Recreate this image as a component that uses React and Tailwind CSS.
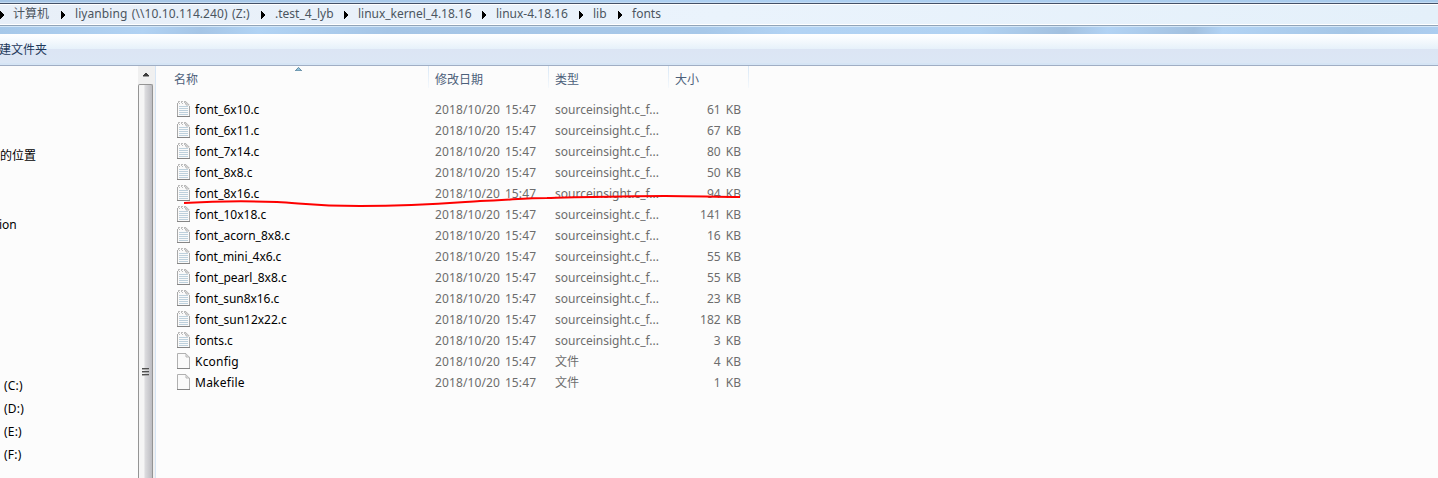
import React from "react";

const crumbs = [
  ["计算机", "w-[50px]", "pl-[8px]"],
  ["liyanbing (\\\\10.10.114.240) (Z:)", "w-[189px]", "pl-[9px] [word-spacing:1.2px] tracking-[0.08px]"],
  [".test_4_lyb", "w-[72px]", "pl-[9px]"],
  ["linux_kernel_4.18.16", "w-[127px]", "pl-[9px] tracking-[-0.03px]"],
  ["linux-4.18.16", "w-[86px]", "pl-[9px]"],
  ["lib", "w-[28px]", "pl-[9px]"],
  ["fonts", "w-[40px]", "pl-[9px]"],
];

const files = [
  ["font_6x10.c", "61 KB"],
  ["font_6x11.c", "67 KB"],
  ["font_7x14.c", "80 KB"],
  ["font_8x8.c", "50 KB"],
  ["font_8x16.c", "94 KB"],
  ["font_10x18.c", "141 KB"],
  ["font_acorn_8x8.c", "16 KB"],
  ["font_mini_4x6.c", "55 KB", "tracking-[-0.1px]"],
  ["font_pearl_8x8.c", "55 KB"],
  ["font_sun8x16.c", "23 KB", "tracking-[-0.05px]"],
  ["font_sun12x22.c", "182 KB"],
  ["fonts.c", "3 KB"],
  ["Kconfig", "4 KB", "tracking-[0.2px]"],
  ["Makefile", "1 KB", "tracking-[0.25px]"],
];

function Arrow() {
  return (
    <svg width="5" height="8" viewBox="0 0 5 8" className="mt-px shrink-0" shapeRendering="crispEdges">
      <path d="M0 0h1v1h1v1h1v1h1v2h-1v1h-1v1h-1v1h-1z" fill="#000" />
    </svg>
  );
}

function FileIcon({ lined }) {
  return (
    <svg width="13" height="16" viewBox="0 0 13 16" className="mt-[2px] shrink-0 self-start">
      <path d="M0.5 0.5H8.5L12.5 4.5V15.5H0.5Z" fill="#fafafa" />
      {lined ? (
        <>
          <path d="M2 5.5h9M2 7.5h9M2 9.5h9M2 11.5h9M2 13.5h9" stroke="#bdd0dc" />
          <path d="M0.5 2V15M12.5 5V15" stroke="#a8a8a8" />
          <path d="M1 .5h2M4 .5h2M7 .5h2M2 2.5h1M5 2.5h1M8 2.5h1M1.5 1v1M4.5 1v1M7.5 1v1" stroke="#bcbcbc" />
        </>
      ) : (
        <path d="M0.5 15V0.5H9M12.5 4V15" fill="none" stroke="#b0b0b0" />
      )}
      <path d="M9 .8V4H12.2Z" fill="#eeeeee" stroke="#b5b5b5" />
      <path d="M0 15.5H13" stroke="#858585" />
    </svg>
  );
}

function Column({ label, width }) {
  return (
    <div className={`${width} flex h-[26px] shrink-0 items-center pl-[6px] text-[#4c607a]`}>
      <span className="flex-1">{label}</span>
      <span className="h-[22px] w-px self-start bg-linear-to-b from-[#d9e8f6] to-[#f4f8fc]" />
    </div>
  );
}

export default function App() {
  return (
    <div className="flex h-[478px] w-[1438px] flex-col overflow-hidden bg-[#fcfcfc] font-['Noto_Sans','Noto_Sans_CJK_SC',sans-serif] text-[12px] leading-[21px] whitespace-pre">
      <div className="h-[2px] shrink-0 bg-linear-to-r from-[#a3c3e4] via-[#aed0f2] to-[#a8caeb]" />
      <div className="h-px shrink-0 bg-[#c5dcf3]" />
      <div className="flex h-[23px] shrink-0 items-center border-t border-b border-t-[#445168] border-b-[#91a4b8] bg-[#e8f1fa]">
        <div className="flex h-full w-full items-center border-y border-white bg-linear-to-r from-[#e8eff8] via-[#eaf3fc] to-[#e4f0fa] text-[#4b5560]">
          {crumbs.map(([label, width, spacing], i) => (
            <React.Fragment key={label}>
              <Arrow />
              <span className={`${width} ${spacing} mt-[-2px] shrink-0`}>{label}</span>
              {i < crumbs.length - 1 && <span className="w-[6px] shrink-0" />}
            </React.Fragment>
          ))}
        </div>
      </div>
      <div className="h-px shrink-0 bg-[#d5e8f9]" />
      <div className="h-[7px] shrink-0 bg-[linear-gradient(100deg,#a6c8e9_0%,#b1d2f3_10%,#a5c5e6_14%,#b1d3f4_18%,#a5c5e6_27%,#a7c8e9_49%,#b2d3f4_55%,#b1d2f2_68%,#a2c0df_74%,#b2d3f4_77%,#a2c0df_83%,#b2d3f4_85%,#a5c6e6_94%,#accdf0_100%)]" />
      <div className="flex h-[32px] shrink-0 flex-col border-b border-[#a0aec4] bg-[#dce6f4]">
        <div className="flex h-full items-center border-b-2 border-[#d6e5f5] bg-[linear-gradient(#ffffff_0px,#fbfdff_3px,#e6f1fa_15px,#dce5f4_15px,#dce7f5_29px)] text-[#1e395b]">
          <span className="ml-[-1px] pt-[2px]">建文件夹</span>
        </div>
      </div>
      <div className="flex min-h-0 flex-1">
        <div className="flex w-[138px] shrink-0 flex-col text-black">
          <div className="mt-[79px] h-[21px]">的位置</div>
          <div className="mt-[48px] ml-[-1px] h-[21px]">ion</div>
          <div className="mt-[139px] flex flex-col pl-[4px] leading-[23px] tracking-[0.2px]">
            <span>(C:)</span>
            <span>(D:)</span>
            <span>(E:)</span>
            <span>(F:)</span>
          </div>
        </div>
        <div className="flex w-[17px] shrink-0 flex-col bg-[#f0f0f0] pr-[2px]">
          <div className="flex h-[18px] shrink-0 items-center justify-center">
            <svg width="8" height="4" viewBox="0 0 8 4" className="ml-px" shapeRendering="crispEdges">
              <path d="M3 0h2v1h1v1h1v1H1V2h1V1h1z" fill="#3c3c3c" />
              <path d="M1 3h6v1H1z" fill="#9a9a9a" />
            </svg>
          </div>
          <div className="flex flex-1 justify-center rounded-t-[2px] border border-b-0 border-[#949494] bg-linear-to-r from-[#f5f5f5] from-35% via-[#dadadd] via-50% to-[#bcbcc1]">
            <svg width="7" height="9" viewBox="0 0 7 9" className="mt-[283px]" shapeRendering="crispEdges">
              <path d="M0 .5h7M0 3.5h7M0 6.5h7" stroke="#505050" />
              <path d="M0 1.5h7M0 4.5h7M0 7.5h7" stroke="#aaaaaa" />
            </svg>
          </div>
        </div>
        <div className="w-px shrink-0 bg-[#d6e5f5]" />
        <div className="relative flex flex-1 flex-col">
          <div className="flex h-[33px] shrink-0 pl-[12px]">
            <Column label="名称" width="w-[261px]" />
            <Column label="修改日期" width="w-[120px]" />
            <Column label="类型" width="w-[120px]" />
            <Column label="大小" width="w-[80px]" />
          </div>
          {files.map(([name, size, tracking = ""], i) => (
            <div key={name} className="flex h-[21px] shrink-0 items-center pl-[21px] text-[#6d6d6d]">
              <FileIcon lined={i < 12} />
              <span className={`${tracking} w-[240px] shrink-0 pl-[5px] text-black`}>{name}</span>
              <span className="w-[120px] shrink-0 pl-[5px] tracking-[0.12px] [word-spacing:1.6px]">2018/10/20 15:47</span>
              <span className="w-[120px] shrink-0 pl-[5px]">{i < 12 ? "sourceinsight.c_f..." : "文件"}</span>
              <span className="w-[71px] shrink-0 text-right [word-spacing:2px]">{size}</span>
            </div>
          ))}
          <svg className="absolute top-[1px] left-[139px]" width="7" height="4" viewBox="0 0 7 4">
            <path d="M0.3 3.8L3.5 .4L6.7 3.8Z" fill="#8fc3dc" stroke="#3c6a86" strokeWidth=".7" />
          </svg>
          <svg className="absolute top-[120px] left-0" width="600" height="30" viewBox="156 186 600 30" fill="none">
            <path d="M184 203C218 201 250 201 277 202C300 203 314 206 360 206C420 206 450 203 480 201C510 200 525 198 547 198C590 197 630 196 665 196C695 196 715 197 740 197" stroke="#fe0000" strokeWidth="2" />
          </svg>
        </div>
      </div>
    </div>
  );
}
